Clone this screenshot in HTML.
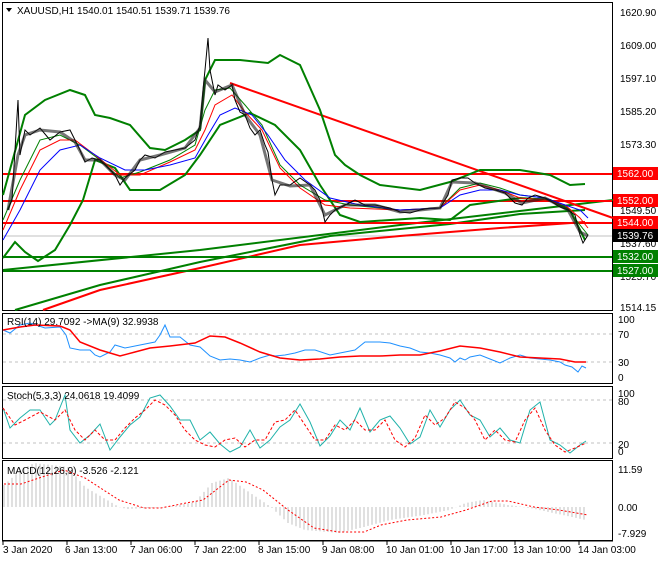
<!DOCTYPE html>
<html><head><meta charset="utf-8"><style>
body{margin:0;background:#fff;width:660px;height:560px;overflow:hidden;font-family:"Liberation Sans",sans-serif;}
svg text{font-family:"Liberation Sans",sans-serif;font-size:10px;fill:#000}
</style></head><body>
<svg width="660" height="560" viewBox="0 0 660 560" xmlns="http://www.w3.org/2000/svg">
<rect width="660" height="560" fill="#fff"/>
<rect x="2.5" y="2.5" width="610" height="308" fill="none" stroke="#000"/>
<rect x="2.5" y="313.5" width="610" height="70" fill="none" stroke="#000"/>
<rect x="2.5" y="386.5" width="610" height="72" fill="none" stroke="#000"/>
<rect x="2.5" y="460.5" width="610" height="80" fill="none" stroke="#000"/>
<line x1="2" y1="541" x2="613" y2="541" stroke="#000"/>
<line x1="3" y1="236" x2="612" y2="236" stroke="#c0c0c0"/>
<polyline fill="none" stroke="#ff0000" stroke-width="2" points="43,310 100,290 200,268 300,245 400,236 500,228 585,222"/>
<polyline fill="none" stroke="#008000" stroke-width="2" points="15,310 100,285 200,262 330,236 450,224 520,214 585,210"/>
<polyline fill="none" stroke="#008000" stroke-width="2" points="3,270 200,250 400,225 613,200"/>
<line x1="3" y1="257" x2="612" y2="257" stroke="#008000" stroke-width="2"/>
<line x1="3" y1="271" x2="612" y2="271" stroke="#008000" stroke-width="2"/>
<line x1="3" y1="174" x2="612" y2="174" stroke="#ff0000" stroke-width="2"/>
<line x1="3" y1="201" x2="612" y2="201" stroke="#ff0000" stroke-width="2"/>
<line x1="3" y1="223" x2="612" y2="223" stroke="#ff0000" stroke-width="2"/>
<polyline fill="none" stroke="#ff0000" stroke-width="2" points="230,83 613,218"/>
<polyline fill="none" stroke="#008000" stroke-width="2" points="3,195 25,115 45,100 70,90 85,95 95,115 110,118 130,125 150,148 165,150 185,140 200,130 205,80 215,60 240,60 268,63 280,55 300,65 320,110 335,155 345,165 360,175 380,185 420,190 450,182 480,170 520,170 550,175 570,185 585,184"/>
<polyline fill="none" stroke="#008000" stroke-width="2" points="3,258 15,242 25,252 38,261 55,250 70,225 83,200 95,160 115,168 130,190 160,190 185,175 200,155 220,125 250,113 275,125 300,150 320,185 340,215 360,222 420,218 450,220 470,205 520,198 550,200 570,210 585,240"/>
<polyline fill="none" stroke="#008000" stroke-width="1" points="3,220 20,180 40,140 60,135 80,145 100,160 120,178 140,172 170,160 195,145 205,110 215,90 230,88 245,105 262,125 280,165 300,185 325,200 350,205 400,210 440,208 460,188 480,183 500,188 520,195 545,198 565,205 580,225 588,235"/>
<polyline fill="none" stroke="#ff0000" stroke-width="1" points="3,230 20,190 40,150 60,140 75,140 95,155 120,175 140,175 170,162 195,150 205,130 215,105 232,95 245,112 262,130 280,168 300,188 325,205 350,208 400,210 440,208 460,190 480,185 500,190 520,198 545,200 565,205 580,218 588,228"/>
<polyline fill="none" stroke="#0000ff" stroke-width="1" points="3,240 20,210 40,170 60,150 80,145 100,158 125,170 145,170 170,165 195,158 208,135 220,115 235,108 252,115 268,135 285,160 305,180 330,198 360,205 400,210 440,208 460,195 480,190 500,190 520,195 545,198 565,205 580,210 588,218"/>
<polyline fill="none" stroke="#000" stroke-width="1" points="8,210 12,200 18,100 20,155 25,130 30,135 40,128 50,140 60,132 70,130 75,140 80,150 85,162 92,158 100,160 108,168 115,175 120,185 125,178 135,170 140,160 145,155 155,158 165,152 175,150 185,148 195,140 200,125 203,90 205,70 208,38 210,70 215,95 218,85 225,90 232,85 235,100 240,112 245,115 250,128 255,135 260,130 265,145 268,152 272,180 275,195 280,185 290,185 300,178 310,185 315,190 320,200 325,222 330,215 335,210 345,205 355,200 365,205 375,205 390,208 400,212 410,213 420,210 430,208 440,208 448,195 452,180 460,178 468,178 475,183 485,188 495,190 505,193 515,203 522,205 528,198 535,195 545,198 552,202 560,207 568,210 575,215 580,235 583,243 588,235"/>
<polyline fill="none" stroke="#1a1a1a" stroke-width="3" opacity="0.6" points="8,210 18,155 25,135 40,130 60,132 75,142 85,160 100,160 115,175 125,180 140,160 160,155 185,148 200,128 205,80 215,92 232,85 245,115 260,135 272,180 290,186 310,185 325,215 345,205 375,205 400,212 440,208 452,182 475,183 505,193 522,203 545,198 568,210 580,232 588,236"/>
<g>
<text x="620" y="16">1620.90</text>
<text x="620" y="49">1609.00</text>
<text x="620" y="82">1597.10</text>
<text x="620" y="115">1585.20</text>
<text x="620" y="148">1573.30</text>
<text x="620" y="214">1549.50</text>
<text x="620" y="247">1537.60</text>
<text x="620" y="280">1525.70</text>
<text x="620" y="311">1514.15</text>
</g>
<rect x="613" y="167" width="45" height="13" fill="#ff0000"/><text x="617" y="177" style="fill:#fff">1562.00</text>
<rect x="613" y="194" width="45" height="13" fill="#ff0000"/><text x="617" y="204" style="fill:#fff">1552.00</text>
<rect x="613" y="216" width="45" height="13" fill="#ff0000"/><text x="617" y="226" style="fill:#fff">1544.00</text>
<rect x="613" y="229" width="45" height="13" fill="#000"/><text x="617" y="239" style="fill:#fff">1539.76</text>
<rect x="613" y="250" width="45" height="13" fill="#008000"/><text x="617" y="260" style="fill:#fff">1532.00</text>
<rect x="613" y="264" width="45" height="13" fill="#008000"/><text x="617" y="274" style="fill:#fff">1527.00</text>
<path d="M6,8 L12,8 L9,12 Z" fill="#000"/>
<text x="17" y="14">XAUUSD,H1  1540.01 1540.51 1539.71 1539.76</text>
<line x1="3" y1="334" x2="612" y2="334" stroke="#c0c0c0" stroke-dasharray="3,3"/>
<line x1="3" y1="362" x2="612" y2="362" stroke="#c0c0c0" stroke-dasharray="3,3"/>
<polyline fill="none" stroke="#1e90ff" stroke-width="1" points="3,330 10,333 20,325 30,323 45,328 60,327 66,335 70,348 80,350 90,350 95,355 100,357 110,352 115,345 125,348 140,345 155,342 160,335 165,325 170,337 180,337 190,345 200,347 210,356 220,360 230,359 240,360 250,362 260,358 270,355 275,356 285,355 295,353 305,350 315,350 330,355 340,353 355,350 365,342 380,342 390,343 400,346 410,348 420,352 430,353 440,355 450,358 455,362 460,358 465,360 470,357 480,355 490,359 500,363 510,358 520,355 530,358 540,359 550,360 560,362 565,365 572,367 578,372 582,366 586,368"/>
<polyline fill="none" stroke="#ff0000" stroke-width="1.5" points="3,330 20,327 35,325 60,326 70,330 80,342 100,350 120,356 135,352 150,348 170,346 195,343 210,336 225,337 240,343 260,352 280,358 300,360 320,359 340,357 360,356 380,356 400,355 420,355 440,351 460,346 480,348 500,352 520,357 540,358 560,359 575,362 586,362"/>
<text x="7" y="325">RSI(14) 29.7092  -&gt;MA(9) 32.9938</text>
<text x="618" y="323">100</text><text x="618" y="338">70</text><text x="618" y="366">30</text><text x="618" y="381">0</text>
<line x1="3" y1="400" x2="612" y2="400" stroke="#c0c0c0" stroke-dasharray="3,3"/>
<line x1="3" y1="443" x2="612" y2="443" stroke="#c0c0c0" stroke-dasharray="3,3"/>
<polyline fill="none" stroke="#20b2aa" stroke-width="1" points="3,408 10,428 20,418 30,410 40,410 50,425 55,420 65,395 70,430 80,443 90,435 100,424 110,450 120,437 130,425 140,417 150,398 160,395 170,406 180,420 190,420 200,440 210,432 220,444 230,452 240,447 250,430 260,448 270,440 280,427 290,420 300,404 310,422 320,446 330,436 340,420 350,430 360,408 370,432 380,420 390,416 400,428 410,444 420,437 430,410 440,427 450,410 460,400 470,415 480,420 490,437 500,428 510,440 520,443 530,410 540,402 550,440 560,445 570,453 580,445 586,441"/>
<polyline fill="none" stroke="#ff0000" stroke-width="1" stroke-dasharray="3,2" points="3,408 15,425 25,420 40,412 55,420 65,410 75,430 85,440 95,430 105,440 115,440 125,428 135,418 145,410 155,400 165,405 175,415 185,430 195,440 205,445 215,447 225,440 235,438 245,447 255,440 265,440 275,422 285,420 295,410 305,425 315,440 325,440 335,425 345,430 355,420 365,430 375,430 385,420 395,440 405,447 415,438 425,415 435,425 445,418 455,402 465,408 475,420 485,440 495,430 505,440 515,442 525,420 535,408 545,430 555,445 565,452 575,448 586,443"/>
<text x="7" y="399">Stoch(5,3,3) 24.0618 19.4099</text>
<text x="618" y="397">100</text><text x="618" y="405">80</text><text x="618" y="448">20</text><text x="618" y="455">0</text>
<path id="hist" fill="none" stroke="#c0c0c0" stroke-width="1" d="M4,507V485 M34,507V463 M68,507V467 M85,507V487 M212,507V483 M229,507V478 M305,507V530 M339,507V533 M483,507V500"/>
<polyline fill="none" stroke="#ff0000" stroke-width="1" stroke-dasharray="2,2" points="4,484 21,484 42,477 64,470 85,478 119,500 144,508 161,508 186,503 203,500 229,480 246,482 263,490 288,510 314,528 339,532 364,532 381,525 407,520 441,517 466,510 492,501 508,501 534,507 559,510 588,515"/>
<text x="7" y="474">MACD(12,26,9) -3.526 -2.121</text>
<text x="618" y="473">11.59</text><text x="618" y="511">0.00</text><text x="618" y="537">-7.929</text>
<g stroke="#000"><path d="M3,541v4 M67,541v4 M131,541v4 M195,541v4 M259,541v4 M323,541v4 M387,541v4 M451,541v4 M515,541v4 M579,541v4"/></g>
<text x="3" y="553">3 Jan 2020</text>
<text x="65" y="553">6 Jan 13:00</text>
<text x="130" y="553">7 Jan 06:00</text>
<text x="194" y="553">7 Jan 22:00</text>
<text x="258" y="553">8 Jan 15:00</text>
<text x="322" y="553">9 Jan 08:00</text>
<text x="386" y="553">10 Jan 01:00</text>
<text x="450" y="553">10 Jan 17:00</text>
<text x="513" y="553">13 Jan 10:00</text>
<text x="578" y="553">14 Jan 03:00</text>
</svg>
<script>
(function(){
var p=[[4,485],[21,470],[34,463],[68,467],[85,487],[119,507],[127,509],[169,507],[195,502],[212,483],[229,478],[246,490],[271,507],[288,523],[305,530],[339,533],[364,527],[390,520],[424,515],[449,510],[466,503],[483,500],[508,505],[530,508],[586,520]];
var d="";
for(var x=4;x<=586;x+=4){
 for(var i=0;i<p.length-1;i++){ if(x>=p[i][0]&&x<=p[i+1][0]){var t=(x-p[i][0])/(p[i+1][0]-p[i][0]);var y=p[i][1]+t*(p[i+1][1]-p[i][1]);d+="M"+x+",507V"+y.toFixed(1)+" ";break;} }
}
document.getElementById("hist").setAttribute("d",d);
})();
</script>
</body></html>
